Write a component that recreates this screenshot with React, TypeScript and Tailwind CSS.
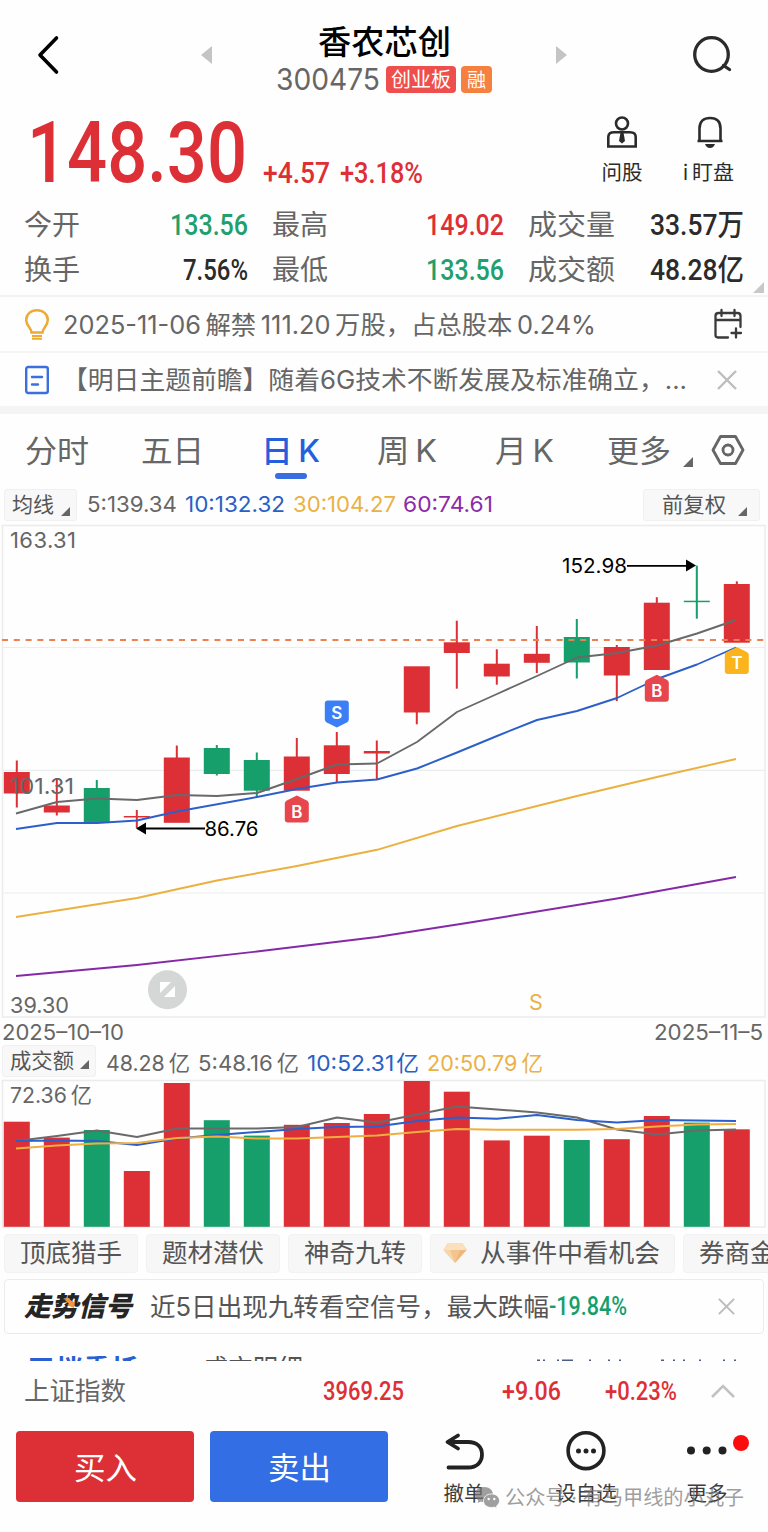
import { useLayoutEffect, useRef, useState, type ReactNode } from "react";

/* Text that is condensed or widened to fill exactly the width of its box. */
function Fit({ className, children }: { className: string; children: ReactNode }) {
  const box = useRef<HTMLSpanElement>(null);
  const text = useRef<HTMLSpanElement>(null);
  const [scale, setScale] = useState(1);
  useLayoutEffect(() => {
    if (box.current && text.current && text.current.offsetWidth > 0) {
      setScale(box.current.clientWidth / text.current.getBoundingClientRect().width);
    }
  }, []);
  return (
    <span ref={box} className={`flex shrink-0 whitespace-nowrap ${className}`}>
      <span ref={text} className="block w-max shrink-0 origin-left" style={{ transform: `scaleX(${scale})` }}>
        {children}
      </span>
    </span>
  );
}

const din = "font-['Roboto','Noto_Sans_CJK_SC',sans-serif] font-medium";
const sans = "Inter, 'Noto Sans CJK SC', sans-serif";

function Corner({ className }: { className: string }) {
  return (
    <svg viewBox="0 0 10 10" className={`shrink-0 ${className}`}>
      <path d="M10 0V10H0Z" fill="currentColor" />
    </svg>
  );
}

function Close({ className }: { className: string }) {
  return (
    <svg viewBox="0 0 20 20" className={`shrink-0 ${className}`} fill="none" stroke="#bdbdbd" strokeWidth="2.4">
      <path d="M1 1L19 19M19 1L1 19" />
    </svg>
  );
}

function Header() {
  return (
    <header className="flex h-[104px] pl-[37px] pr-[35px]">
      <svg viewBox="0 0 24 40" className="mt-[35px] h-10 w-6" fill="none" stroke="#000" strokeWidth="3.6" strokeLinecap="round" strokeLinejoin="round">
        <path d="M19.500 3L3 20L19.500 37" />
      </svg>
      <svg viewBox="0 0 11 18" className="ml-[140px] mt-[46px] h-[18px] w-[11px]">
        <path d="M11 0V18L0 9Z" fill="#c4c4c4" />
      </svg>
      <div className="ml-[64px] flex w-[216px] flex-col items-center">
        <h1 className="mt-[22px] text-[33px] font-medium leading-[40px] text-black">
          <Fit className="w-[133px]">香农芯创</Fit>
        </h1>
        <div className="mt-[3px] flex h-7 items-center">
          <Fit className="w-[104px] text-[30px] leading-7 text-[#666] font-normal">300475</Fit>
          <span className="ml-[6px] flex h-[27px] w-[70px] justify-center rounded-[4px] bg-[#ef4f4c] text-[20px] leading-[29px] text-white">
            <Fit className="w-[60px]">创业板</Fit>
          </span>
          <span className="ml-[5px] flex h-[27px] w-[31px] justify-center rounded-[4px] bg-[#f5803f] text-[19px] leading-[29px] text-white">融</span>
        </div>
      </div>
      <svg viewBox="0 0 11 18" className="ml-[64px] mt-[46px] h-[18px] w-[11px]">
        <path d="M0 0V18L11 9Z" fill="#c4c4c4" />
      </svg>
      <svg viewBox="0 0 42 40" className="ml-auto mt-[35px] h-10 w-[42px]" fill="none" stroke="#2b2b2b" strokeWidth="3.300" strokeLinecap="round">
        <circle cx="20.500" cy="19.500" r="16.800" />
        <path d="M32.500 30.500L38.500 34.500" />
      </svg>
    </header>
  );
}

function Price() {
  return (
    <section className={`flex h-24 pl-[27px] text-[#dd3036] ${din}`}>
      <Fit className="mt-[6px] h-20 w-[220px] text-[85px] leading-[86px]">148.30</Fit>
      <Fit className="ml-[16px] mt-[54px] w-[67px] text-[29px] leading-[30px]">+4.57</Fit>
      <Fit className="ml-[10px] mt-[54px] w-[83px] text-[29px] leading-[30px]">+3.18%</Fit>
      <div className="ml-[178px] flex w-[42px] flex-col items-center font-['Inter','Noto_Sans_CJK_SC',sans-serif] font-normal text-[#2b2b2b]">
        <svg viewBox="0 0 32 34" className="mt-[11px] h-[34px] w-8" fill="none" stroke="#2b2b2b" strokeWidth="2.600">
          <circle cx="16" cy="8.500" r="6" />
          <path d="M2.300 31.500V22C2.300 18.500 4.500 17.300 8 17.300H24C27.500 17.300 29.700 18.500 29.700 22V31.500Z" />
          <path d="M14.500 17.500H17.500L19 26L16 28.500L13 26Z" fill="#2b2b2b" stroke="none" />
        </svg>
        <span className="mt-[8px] text-[20.5px] leading-8">问股</span>
      </div>
      <div className="ml-[39px] flex w-[52px] flex-col items-center font-['Inter','Noto_Sans_CJK_SC',sans-serif] font-normal text-[#2b2b2b]">
        <svg viewBox="0 0 30 34" className="ml-[3px] mt-[11px] h-[34px] w-[30px]" fill="none" stroke="#2b2b2b" strokeWidth="2.600">
          <path d="M4.500 26V13.500C4.500 6 9 3 15 3S25.500 6 25.500 13.500V26M2.500 26H27.500" />
          <path d="M10 29H20C19 31.800 17.500 33 15 33S11 31.800 10 29Z" fill="#2b2b2b" stroke="none" />
        </svg>
        <Fit className="mt-[8px] w-[51px] text-[20.5px] leading-8">{"i\u2009盯盘"}</Fit>
      </div>
    </section>
  );
}

function Stat({ label, lw, value, vw, color }: { label: string; lw: string; value: string; vw: string; color: string }) {
  return (
    <div className="flex h-[45px] justify-between leading-[47px]">
      <Fit className={`text-[28px] leading-[49px] text-[#666] ${lw}`}>{label}</Fit>
      <Fit className={`text-[30px] ${din} ${vw} ${color}`}>{value}</Fit>
    </div>
  );
}

function Stats() {
  return (
    <section className="flex h-[97px] border-b-2 border-[#f3f3f3]">
      <div className="ml-[24px] mt-[1px] grid h-[90px] grid-cols-[224px_232px_216px] gap-x-[24px]">
        <Stat label="今开" lw="w-[56px]" value="133.56" vw="w-[78px]" color="text-[#219f6c]" />
        <Stat label="最高" lw="w-[56px]" value="149.02" vw="w-[78px]" color="text-[#dd3036]" />
        <Stat label="成交量" lw="w-[87px]" value="33.57万" vw="w-[94px]" color="text-[#2b2b2b]" />
        <Stat label="换手" lw="w-[56px]" value="7.56%" vw="w-[65px]" color="text-[#2b2b2b]" />
        <Stat label="最低" lw="w-[56px]" value="133.56" vw="w-[78px]" color="text-[#219f6c]" />
        <Stat label="成交额" lw="w-[87px]" value="48.28亿" vw="w-[94px]" color="text-[#2b2b2b]" />
      </div>
      <Corner className="ml-[9px] mt-[82px] size-[11px] text-[#c8c8c8]" />
    </section>
  );
}

function Notices() {
  return (
    <section className="text-[25.5px] text-[#666]">
      <div className="flex h-[56px] items-center border-b-2 border-[#f5f5f5] pl-[24px]">
        <svg viewBox="0 0 26 32" className="h-8 w-[26px]" fill="none" stroke="#ecab35" strokeWidth="2.500">
          <path d="M7.500 24.500C7.500 20 2.200 18 2.200 12C2.200 6 7 2.300 13 2.300S23.800 6 23.800 12C23.800 18 18.500 20 18.500 24.500Z" />
          <path d="M8 28H18M8 30.800H18" strokeWidth="2" />
        </svg>
        <Fit className="ml-[13px] w-[533px] pt-[2px] leading-[54px]">{"2025-11-06\u2009解禁\u2009111.20\u2009万股，占总股本\u20090.24%"}</Fit>
        <svg viewBox="0 0 30 32" className="ml-[117px] h-8 w-[30px]" fill="none" stroke="#3a3a3a" strokeWidth="2.300" strokeLinecap="round">
          <path d="M15 29.500H5C3 29.500 2.500 28.500 2.500 27V8C2.500 6 3.500 5 5.500 5H24.500C26.500 5 27.500 6 27.500 8V19M2.500 12H27.500M8.500 2V8M21.500 2V8M23 20.500V29.500M18.500 25H28" />
        </svg>
      </div>
      <div className="flex h-[53px] items-center pl-[24px]">
        <svg viewBox="0 0 26 30" className="h-[30px] w-[26px]" fill="none" stroke="#3b6fdd" strokeWidth="2.400" strokeLinecap="round">
          <rect x="2.200" y="2" width="21.600" height="26" rx="2" />
          <path d="M8 12H18M8 19.500H14" />
        </svg>
        <Fit className="ml-[12px] w-[625px] leading-[53px]">【明日主题前瞻】随着6G技术不断发展及标准确立，...</Fit>
        <Close className="ml-[30px] size-5" />
      </div>
    </section>
  );
}

function Tabs() {
  return (
    <nav className="flex h-[81px] border-t-8 border-[#f4f4f4] pl-[25px] text-[31px] leading-[74px] text-[#666]">
      <Fit className="w-[64px]">分时</Fit>
      <Fit className="ml-[52px] w-[63px]">五日</Fit>
      <div className="ml-[57px] flex flex-col items-center font-medium text-[#2460dc]">
        <Fit className="h-[59px] w-[59px]">{"日\u2009K"}</Fit>
        <i className="block h-[6px] w-8 rounded-full bg-[#376ee2]" />
      </div>
      <Fit className="ml-[57px] w-[60px]">{"周\u2009K"}</Fit>
      <Fit className="ml-[58px] w-[59px]">{"月\u2009K"}</Fit>
      <Fit className="ml-[53px] w-[64px]">更多</Fit>
      <Corner className="ml-[12px] mt-[43px] size-[10px] text-[#666]" />
      <svg viewBox="0 0 34 32" className="ml-[18px] mt-[20px] h-8 w-[34px]" fill="none" stroke="#666" strokeWidth="2.800" strokeLinejoin="round">
        <path d="M9.500 2.500H24.500L32 16L24.500 29.500H9.500L2 16Z" />
        <circle cx="17" cy="16" r="5" />
      </svg>
    </nav>
  );
}

function AverageBar() {
  return (
    <div className="flex h-[37px] pl-1 pr-[8px] pt-[2px] text-[21.500px] leading-[31px]">
      <div className="flex h-8 w-[73px] rounded-[3px] border border-[#f0f0f0] bg-[#f8f8f8] pl-[7px] text-[21px] leading-[30px] text-[#555]">
        <Fit className="w-[42px]">均线</Fit>
        <Corner className="ml-[7px] mt-[17px] size-[9px] text-[#666]" />
      </div>
      <Fit className="ml-[10px] w-[90px] text-[#666]">5:139.34</Fit>
      <Fit className="ml-[8px] w-[100px] text-[#2a5fc4]">10:132.32</Fit>
      <Fit className="ml-[8px] w-[103px] text-[#e9b246]">30:104.27</Fit>
      <Fit className="ml-[7px] w-[90px] text-[#8a2ba8]">60:74.61</Fit>
      <div className="ml-auto flex h-8 w-[117px] rounded-[3px] border border-[#f0f0f0] bg-[#f8f8f8] pl-[18px] text-[21px] leading-[30px] text-[#555]">
        <Fit className="w-[64px]">前复权</Fit>
        <Corner className="ml-[12px] mt-[17px] size-[9px] text-[#666]" />
      </div>
    </div>
  );
}

const RED = "#dd3036";
const GREEN = "#169e6b";
const STEP = 40;
const X0 = 16.8;

/* colour, body top, body bottom, wick top, wick bottom */
const candles: [string, number, number, number, number][] = [
  [RED, 772, 793.5, 760.5, 807.5],
  [RED, 805.5, 812.5, 778.5, 815.5],
  [GREEN, 788, 822.5, 780, 823.5],
  [RED, 816, 817.5, 810, 828],
  [RED, 757.5, 822.8, 745.5, 822],
  [GREEN, 748, 774, 745, 775.5],
  [GREEN, 760, 790.7, 752.5, 797.5],
  [RED, 756.5, 790.7, 738, 790],
  [RED, 745.3, 774, 732, 782],
  [RED, 751, 753.5, 740.5, 780],
  [RED, 666.3, 712.5, 667, 724.3],
  [RED, 642.3, 653, 620.7, 688.7],
  [RED, 663.7, 676.5, 649.3, 684.7],
  [RED, 653.8, 662.8, 626, 673],
  [GREEN, 637, 662.5, 619, 678.5],
  [RED, 647, 675.5, 645, 701],
  [RED, 602.7, 670, 597.2, 669],
  [GREEN, 600.7, 602.2, 565.6, 618.7],
  [RED, 584, 642.7, 581.3, 642],
];

const volumes: [string, number][] = [
  [RED, 1121.7], [RED, 1137.6], [GREEN, 1130], [RED, 1171], [RED, 1083], [GREEN, 1120.2], [GREEN, 1135.6],
  [RED, 1124.8], [RED, 1123], [RED, 1114], [RED, 1081], [RED, 1091.7], [RED, 1140.4], [RED, 1135.7],
  [GREEN, 1140], [RED, 1139.2], [RED, 1116], [GREEN, 1122.6], [RED, 1129.3],
];

function Line({ points, color }: { points: string; color: string }) {
  return <polyline points={points} fill="none" stroke={color} strokeWidth="1.900" strokeLinejoin="round" />;
}

function Marker({ x, y, letter, color, down }: { x: number; y: number; letter: string; color: string; down?: boolean }) {
  const d = down
    ? "M-9 -13H9Q12 -13 12 -10V6Q12 8 10 9L0 14L-10 9Q-12 8 -12 6V-10Q-12 -13 -9 -13Z"
    : "M-9 13H9Q12 13 12 10V-6Q12 -8 10 -9L0 -14L-10 -9Q-12 -8 -12 -6V10Q-12 13 -9 13Z";
  return (
    <g transform={`translate(${x} ${y})`}>
      <path d={d} fill={color} />
      <text y={down ? 5 : 8} textAnchor="middle" fontSize="17" fontWeight="600" fill="#fff">{letter}</text>
    </g>
  );
}

function CandleChart() {
  return (
    <svg viewBox="0 524 768 494" className="block h-[494px] w-[768px]" fontFamily={sans}>
      <rect x="2.500" y="525.500" width="762.500" height="491.500" fill="none" stroke="#ececec" strokeWidth="1.500" />
      <path d="M3 647.500H765M3 770.300H765M3 893H765" stroke="#e9edeb" strokeWidth="1.200" />
      {candles.map(([color, top, bottom, high, low], i) => (
        <g key={i} fill={color}>
          <rect x={X0 + STEP * i - 1} y={high} width="2" height={low - high} />
          <rect x={X0 + STEP * i - 13} y={top} width="26" height={bottom - top} />
        </g>
      ))}
      <path d="M2 640H766" stroke="#e98153" strokeWidth="1.800" strokeDasharray="6 5.800" />
      <Line color="#696969" points="16,813.5 57,802 97,798.5 137,800 177,795 217,796 257,793 297,779 337,764.500 377,763.500 417,742 457,712 497,694 537,676 577,657.500 617,653 657,645.500 697,633.500 736,620" />
      <Line color="#2c5fc9" points="16,829 57,823 97,823 137,820.5 177,811.5 257,797 297,789 337,782.5 377,779.500 417,768.500 457,752.500 497,736 537,720 577,711 617,698 657,679 697,664.500 736,647.500" />
      <Line color="#eab141" points="16,917 137,898 217,880.500 297,866 377,849.800 457,826 537,806 577,796 657,777 736,759" />
      <Line color="#8529a6" points="16,976 137,965 257,951.500 377,937 470,922.500 617,898.500 736,877" />
      <g fontSize="22" fill="#666">
        <text x="10" y="547.500" textLength="66">163.31</text>
        <text x="10" y="793.500" textLength="64" lengthAdjust="spacingAndGlyphs">101.31</text>
        <text x="10" y="1013" textLength="59" lengthAdjust="spacingAndGlyphs">39.30</text>
      </g>
      <g fontSize="20" fill="#000">
        <text x="562" y="573" textLength="65" lengthAdjust="spacingAndGlyphs">152.98</text>
        <text x="204.500" y="836" textLength="54" lengthAdjust="spacingAndGlyphs">86.76</text>
      </g>
      <path d="M627 565.800H689M144 828.500H205" stroke="#000" strokeWidth="1.800" />
      <path d="M696 565.500L686 559.500V571.500ZM136 828.500L146 822.500V834.500Z" fill="#000" />
      <Marker x={336.800} y={713.500} letter="S" color="#3c7ef5" down />
      <Marker x={296.800} y={809.500} letter="B" color="#e8464d" />
      <Marker x={656.800} y={688.700} letter="B" color="#e8464d" />
      <Marker x={736.800} y={661} letter="T" color="#fbb41d" />
      <circle cx="167.500" cy="989.800" r="19.500" fill="#d5d7d7" />
      <path d="M160 982H171L160 993ZM175 986V997H164Z" fill="#fff" />
      <text x="529" y="1009.500" fontSize="21.500" fill="#e9b246">S</text>
    </svg>
  );
}

function VolumeSection() {
  return (
    <section>
      <div className="flex h-[27px] justify-between pl-[2px] pr-[5px] text-[21px] leading-[30px] text-[#666]">
        <Fit className="w-[122px]">2025–10–10</Fit>
        <Fit className="w-[109px]">2025–11–5</Fit>
      </div>
      <div className="flex h-[34px] pl-[2px] text-[21.500px] leading-[37px]">
        <div className="flex h-8 w-[94px] rounded-[3px] border border-[#f0f0f0] bg-[#f8f8f8] pl-[7px] text-[21px] leading-[29px] text-[#555]">
          <Fit className="w-[64px]">成交额</Fit>
          <Corner className="ml-[6px] mt-[14px] size-[9px] text-[#666]" />
        </div>
        <Fit className="ml-[10px] w-[84px] text-[#666]">{"48.28\u2009亿"}</Fit>
        <Fit className="ml-[8px] w-[101px] text-[#666]">{"5:48.16\u2009亿"}</Fit>
        <Fit className="ml-[8px] w-[112px] text-[#2a5fc4]">{"10:52.31\u200a亿"}</Fit>
        <Fit className="ml-[8px] w-[116px] text-[#e9b246]">{"20:50.79\u2009亿"}</Fit>
      </div>
      <svg viewBox="0 1079 768 149" className="block h-[149px] w-[768px]" fontFamily={sans}>
        <rect x="2.500" y="1080.500" width="762.500" height="146.500" fill="none" stroke="#ececec" strokeWidth="1.500" />
        {volumes.map(([color, top], i) => (
          <rect key={i} x={X0 + STEP * i - 13} y={top} width="26" height={1226.800 - top} fill={color} />
        ))}
        <Line color="#6a6a6a" points="16,1141 57,1136 97,1130.5 137,1137 177,1128.5 257,1128.500 297,1127 337,1117.500 377,1122.500 417,1114.500 457,1106.500 497,1109.500 537,1112.500 577,1117.500 617,1129.500 657,1134.500 697,1130.500 736,1129.500" />
        <Line color="#2c5fc9" points="16,1141 57,1140.500 97,1141 137,1145 177,1138.500 217,1135 257,1132 297,1129 337,1127 377,1126.500 417,1121 457,1117.500 497,1118.700 537,1115 577,1120 617,1122.500 657,1120 697,1120.500 736,1121" />
        <Line color="#efae3d" points="16,1148.5 57,1145.500 97,1143.5 137,1143 177,1138 217,1136.500 257,1138.500 297,1138.500 337,1137 377,1135.500 417,1132 457,1129 497,1129.800 577,1129.700 617,1129 657,1126.500 697,1124.500 736,1124" />
        <text x="10" y="1102.500" fontSize="21.500" fill="#666" textLength="82" lengthAdjust="spacingAndGlyphs">{"72.36\u2009亿"}</text>
      </svg>
    </section>
  );
}

function Chips() {
  const chip = "flex h-[39px] shrink-0 rounded-[4px] border border-[#f2f2f2] bg-[#f7f7f7] pl-[15px] leading-[36px]";
  return (
    <div className="flex h-[51px] gap-[8px] overflow-hidden pl-1 pt-[6px] text-[25.500px] text-[#555]">
      <div className={`${chip} w-[134px]`}><Fit className="w-[102px]">顶底猎手</Fit></div>
      <div className={`${chip} w-[134px]`}><Fit className="w-[102px]">题材潜伏</Fit></div>
      <div className={`${chip} w-[134px]`}><Fit className="w-[102px]">神奇九转</Fit></div>
      <div className={`${chip} w-[245px]`}>
        <svg viewBox="0 0 24 22" className="-ml-[3px] mt-[7px] h-[22px] w-6">
          <path d="M5 1H19L23.500 8L12 21L0.500 8Z" fill="#f2c58e" />
          <path d="M5 1L7 8L12 21L0.500 8Z" fill="#f7d5aa" />
          <path d="M19 1L17 8L12 21L23.500 8Z" fill="#edb87d" />
          <path d="M5 1H19L23.500 8H0.500Z" fill="#fbe0bd" />
        </svg>
        <Fit className="ml-[13px] w-[180px]">从事件中看机会</Fit>
      </div>
      <div className={`${chip} w-[134px]`}><Fit className="w-[102px]">券商金股</Fit></div>
    </div>
  );
}

function Signal() {
  return (
    <div className="ml-1 flex h-[55px] w-[760px] items-center rounded-[4px] border-[1.500px] border-[#ebebeb] pl-[19px] text-[25.500px] leading-[53px] text-[#555]">
      <div className="relative">
        <Fit className="w-[108px] text-[27px] font-black italic text-[#252525]">走势信号</Fit>
        <svg viewBox="0 0 10 12" className="absolute left-[41px] top-[17px] h-3 w-[10px]">
          <path d="M2 0L8 5L10 4L9 11L2 8L4 7L0 3Z" fill="#ef9545" />
        </svg>
      </div>
      <Fit className="ml-[18px] w-[399px]">近5日出现九转看空信号，最大跌幅</Fit>
      <Fit className={`w-[78px] text-[25px] text-[#169e6b] ${din}`}>-19.84%</Fit>
      <Close className="ml-[91px] size-[17px]" />
    </div>
  );
}

function ClippedTabs() {
  return (
    <div className="mt-[22px] flex h-[5px] overflow-hidden pl-[27px] text-[27.500px] leading-[27px]">
      <Fit className="h-[5px] w-[112px] font-bold text-[#2a5fd0]">五档委托</Fit>
      <Fit className="ml-[64px] h-[5px] w-[100px] text-[#555]">成交明细</Fit>
      <svg viewBox="536 1356 202 5" className="ml-[233px] h-[5px] w-[202px]" stroke="#4d5d83" strokeWidth="1.500">
        <path d="M537 1360.200h3M543 1360.200h2M557 1360.200h2M562 1360.200h11M589 1360.200h2M608 1360.200h2M619 1360.200h2M661 1360.200h3M673 1360.200h2M683 1360.200h2M699 1360.200h2M723 1360.200h2M734 1360.200h2" />
      </svg>
    </div>
  );
}

function IndexRow() {
  return (
    <div className={`flex h-[60px] items-center pl-[24px] text-[25.500px] leading-[60px] text-[#dd3036] ${din}`}>
      <Fit className="w-[102px] text-[25.500px] font-normal text-[#666]">上证指数</Fit>
      <Fit className="ml-[197px] w-[81px]">3969.25</Fit>
      <Fit className="ml-[98px] w-[59px]">+9.06</Fit>
      <Fit className="ml-[44px] w-[72px]">+0.23%</Fit>
      <svg viewBox="0 0 26 16" className="ml-[33px] h-4 w-[26px]" fill="none" stroke="#c2c2c2" strokeWidth="2.600">
        <path d="M2 14L13 3L24 14" />
      </svg>
    </div>
  );
}

function Actions() {
  const label = "block text-[20.500px] leading-8 text-[#3c3c3c]";
  return (
    <footer className="flex h-[110px] pl-4 pt-[10px]">
      <button className="flex h-[71px] w-[178px] justify-center rounded-[4px] bg-[#dd3036] text-[31px] leading-[74px] text-white">
        <Fit className="w-[63px]">买入</Fit>
      </button>
      <button className="ml-4 flex h-[71px] w-[178px] justify-center rounded-[4px] bg-[#336ee5] text-[31px] leading-[74px] text-white">
        <Fit className="w-[63px]">卖出</Fit>
      </button>
      <div className="relative flex">
        <div className="ml-[55px] flex w-[42px] flex-col items-center">
          <svg viewBox="0 0 42 40" className="ml-[2px] h-10 w-[42px]" fill="none" stroke="#222" strokeWidth="3.800" strokeLinecap="round" strokeLinejoin="round">
            <path d="M14 4.500L3.500 11L14 17.500M4 11H24C33 11 38 16 38 23.500S33 36.500 24 36.500H4.500" />
          </svg>
          <span className={`${label} mt-[7px]`}>撤单</span>
        </div>
        <div className="ml-[69px] flex w-[64px] flex-col items-center">
          <svg viewBox="0 0 40 40" className="size-10" fill="#222">
            <circle cx="20" cy="19.700" r="17.900" fill="none" stroke="#222" strokeWidth="3.600" />
            <circle cx="12.500" cy="20" r="2.500" />
            <circle cx="20" cy="20" r="2.500" />
            <circle cx="27.500" cy="20" r="2.500" />
          </svg>
          <span className={`${label} mt-[7px]`}>设自选</span>
        </div>
        <div className="ml-[68px] flex w-[42px] flex-col items-center">
          <svg viewBox="0 0 42 40" className="h-10 w-[42px]" fill="#222">
            <circle cx="5" cy="19.500" r="4" />
            <circle cx="20.700" cy="19.500" r="4" />
            <circle cx="36.500" cy="19.500" r="4" />
          </svg>
          <span className={`${label} mt-[7px]`}>更多</span>
        </div>
        <i className="absolute left-[345px] top-[4px] block size-4 rounded-full bg-[#fa0d0d]" />
        <div className="absolute left-[86px] top-[53px] flex items-center text-[20px] leading-7 text-[#777] opacity-70">
          <svg viewBox="0 0 26 24" className="h-6 w-[26px]">
            <path d="M10 1C4.500 1 1 4.500 1 8.500C1 11 2.300 13 4.300 14.300L3.600 17L6.800 15.500C8 15.900 9 16 10 16C15.500 16 19 12.500 19 8.500S15.500 1 10 1Z" fill="#777" />
            <path d="M17.500 8C12.500 8 9.500 11 9.500 14.800S12.500 21.500 17.500 21.500C18.500 21.500 19.500 21.400 20.500 21L23 22.500L22.500 20C24.500 18.700 25.500 16.800 25.500 14.800C25.500 11 22.500 8 17.500 8Z" fill="#777" stroke="#fff" strokeWidth="0.800" />
            <circle cx="14.700" cy="13" r="1.200" fill="#fff" />
            <circle cx="20.300" cy="13" r="1.200" fill="#fff" />
          </svg>
          <Fit className="ml-[5px] w-[239px]">公众号 · 有马甲线的小丸子</Fit>
        </div>
      </div>
    </footer>
  );
}

export default function App() {
  return (
    <main className="h-[1532px] w-[768px] overflow-hidden bg-[#fefefe] font-['Inter','Noto_Sans_CJK_SC',sans-serif]">
      <Header />
      <Price />
      <Stats />
      <Notices />
      <Tabs />
      <AverageBar />
      <CandleChart />
      <VolumeSection />
      <Chips />
      <Signal />
      <ClippedTabs />
      <IndexRow />
      <Actions />
    </main>
  );
}
